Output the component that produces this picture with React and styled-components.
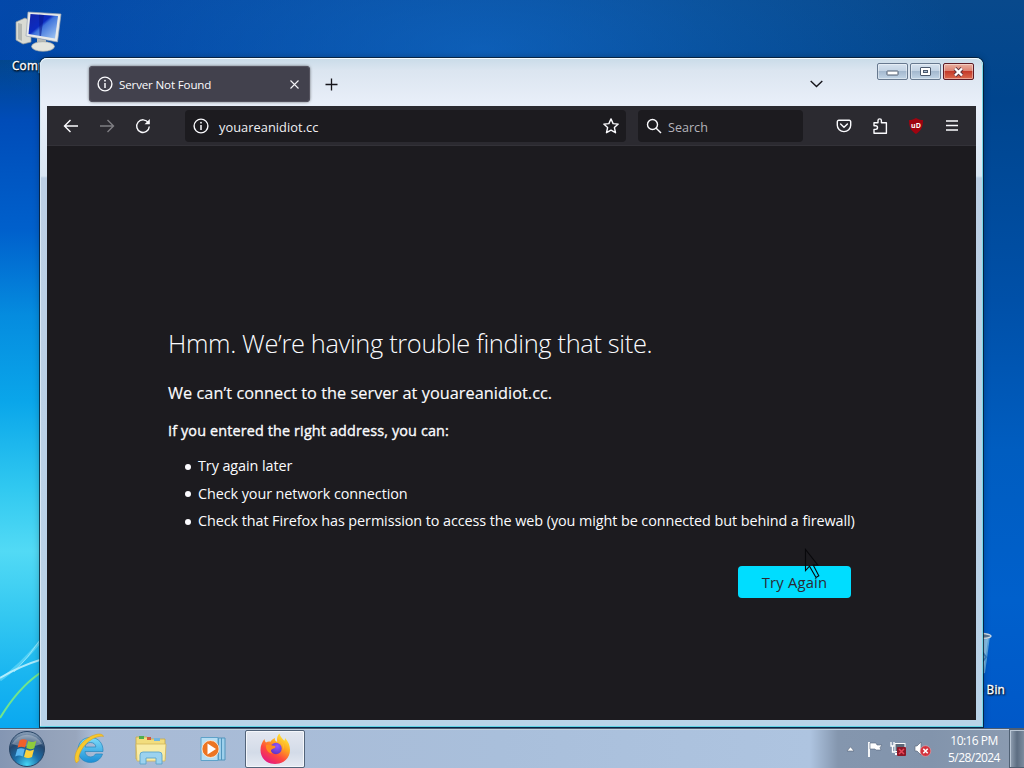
import React from 'react'
import styled, { createGlobalStyle } from 'styled-components'

const App = () => {
    return (
        <>
            <GlobalStyle />
            <Screen>
                <Desktop>
                    <Wallpaper />
                    <DesktopIcon $left={12} $top={8}>
                        <ComputerIcon />
                        <DesktopLabel>Computer</DesktopLabel>
                    </DesktopIcon>
                    <DesktopIcon $left={930} $top={628} $right>
                        <BinIcon />
                        <DesktopLabel>Recycle Bin</DesktopLabel>
                    </DesktopIcon>
                    <BrowserWindow />
                    <Cursor />
                </Desktop>
                <Taskbar />
            </Screen>
        </>
    )
}

const BrowserWindow = () => {
    return (
        <Frame>
            <TitleBar>
                <Tab>
                    <InfoIcon />
                    <TabTitle>Server Not Found</TabTitle>
                    <svg width="9" height="9" viewBox="0 0 9 9" stroke="#f3f3f6" strokeWidth="1.1">
                        <path d="M.5 .5l8 8M8.500 .5l-8 8" />
                    </svg>
                </Tab>
                <NewTab width="13" height="13" viewBox="0 0 13 13" stroke="#15141a" strokeWidth="1.3">
                    <path d="M6.500 .5v12M.5 6.500h12" />
                </NewTab>
                <TabList width="13" height="8" viewBox="0 0 13 8" fill="none" stroke="#15141a" strokeWidth="1.4">
                    <path d="M.7 1l5.800 5.500 5.800 -5.500" />
                </TabList>
                <WindowButtons>
                    <WindowButton>
                        <svg width="13" height="9" viewBox="0 0 13 9">
                            <rect x="1" y="4" width="11" height="4" rx=".5" fill="#fff" stroke="#4c5a6e" />
                        </svg>
                    </WindowButton>
                    <WindowButton>
                        <svg width="11" height="9" viewBox="0 0 11 9">
                            <rect x=".5" y=".5" width="10" height="8" rx=".5" fill="#fff" stroke="#4c5a6e" />
                            <rect x="3.500" y="3.500" width="4" height="2" fill="#a8bcd2" stroke="#4c5a6e" />
                        </svg>
                    </WindowButton>
                    <WindowButton $close>
                        <svg width="13" height="10" viewBox="0 0 13 10">
                            <path d="M3 1.500l7 7M10 1.500l-7 7" stroke="#5d3440" strokeWidth="4" />
                            <path d="M3 1.500l7 7M10 1.500l-7 7" stroke="#fff" strokeWidth="2.400" />
                        </svg>
                    </WindowButton>
                </WindowButtons>
            </TitleBar>
            <Toolbar>
                <NavGroup>
                    <NavIcon>
                        <path d="M15 8H1.500M7.500 2L1.500 8l6 6" />
                    </NavIcon>
                    <NavIcon $dim>
                        <path d="M1 8h13.500M8.500 2l6 6-6 6" />
                    </NavIcon>
                    <NavIcon>
                        <path d="M13.300 4.700A6.300 6.300 0 1 0 14.300 8.500" />
                        <path d="M14.800 1v5.200H9.600z" fill="#fbfbfe" stroke="none" />
                    </NavIcon>
                </NavGroup>
                <UrlBar>
                    <InfoIcon />
                    <UrlText>youareanidiot.cc</UrlText>
                    <NavIcon>
                        <path strokeLinejoin="round" d="M8 .9l2.100 4.700 5.100.5-3.800 3.500 1.100 5.100L8 12.100l-4.500 2.600 1.100-5.100L.8 6.100l5.100-.5z" />
                    </NavIcon>
                </UrlBar>
                <SearchBar>
                    <NavIcon>
                        <circle cx="6.500" cy="6.500" r="5" />
                        <path d="M10.200 10.200l4.800 4.800" />
                    </NavIcon>
                    <span>Search</span>
                </SearchBar>
                <Actions>
                    <NavIcon>
                        <path d="M2.800 2.200h10.400a1.500 1.500 0 0 1 1.500 1.500v3.600a6.700 6.300 0 0 1-13.400 0V3.700a1.500 1.500 0 0 1 1.500-1.500z" />
                        <path d="M4.600 6l3.400 3.300L11.400 6" strokeLinecap="round" />
                    </NavIcon>
                    <NavIcon>
                        <path strokeLinejoin="round" d="M2 15.200V11.400h1.700a1.800 1.800 0 0 0 0-3.600H2V4.700h4V2.600a1.700 1.700 0 0 1 3.400 0v2.100h5v10.500z" />
                    </NavIcon>
                    <Shield>
                        <svg width="16" height="16" viewBox="0 0 16 16">
                            <path d="M8 0c2 1.300 4.300 2 7 2.100C15 9 13.300 12.800 8 16 2.700 12.800 1 9 1 2.100 3.700 2 6 1.300 8 0z" fill="#a00310" />
                        </svg>
                        <ShieldText>uD</ShieldText>
                    </Shield>
                    <NavIcon>
                        <path d="M2 3h12M2 7.500h12M2 12h12" />
                    </NavIcon>
                </Actions>
            </Toolbar>
            <Page>
                <Heading>Hmm. We’re having trouble finding that site.</Heading>
                <Lead>We can’t connect to the server at youareanidiot.cc.</Lead>
                <Hint>If you entered the right address, you can:</Hint>
                <Tips>
                    <li>Try again later</li>
                    <li>Check your network connection</li>
                    <li>Check that Firefox has permission to access the web (you might be connected but behind a firewall)</li>
                </Tips>
                <RetryButton>Try Again</RetryButton>
            </Page>
        </Frame>
    )
}

const Taskbar = () => {
    return (
        <Bar>
            <StartOrb />
            <TaskButton><ExplorerE /></TaskButton>
            <TaskButton><FolderIcon /></TaskButton>
            <TaskButton><PlayerIcon /></TaskButton>
            <TaskButton $active><FirefoxIcon /></TaskButton>
            <Tray>
                <TrayIcon width="9" height="6" viewBox="0 0 9 6">
                    <path d="M4.500 .8L8 5H1z" fill="#fff" stroke="#59667a" strokeWidth=".6" />
                </TrayIcon>
                <TrayIcon width="16" height="16" viewBox="0 0 16 16">
                    <path d="M2 1v15" stroke="#fff" strokeWidth="1.800" />
                    <path d="M3 2h6l1 2h5l-2 2.500 1 2.500H9L8 8H3z" fill="#fff" stroke="#55647c" strokeWidth=".6" />
                </TrayIcon>
                <TrayIcon width="17" height="16" viewBox="0 0 17 16">
                    <path d="M1 1v4h3V1M2.500 5v6h3" fill="none" stroke="#fff" strokeWidth="1.300" />
                    <rect x="5" y="2.500" width="10" height="8" fill="#5c6878" stroke="#fff" />
                    <path d="M5 13h8" stroke="#fff" strokeWidth="2" />
                    <rect x="7" y="6" width="9" height="9" rx="1" fill="#8e1625" />
                    <path d="M9 8l5 5M14 8l-5 5" stroke="#e6485a" strokeWidth="1.500" />
                </TrayIcon>
                <TrayIcon width="18" height="16" viewBox="0 0 18 16">
                    <path d="M1 5h2l4-4v13l-4-4H1z" fill="#fff" stroke="#5e6a7c" strokeWidth=".7" />
                    <circle cx="11.500" cy="10" r="5.300" fill="#d3313c" stroke="#eda0a4" strokeWidth=".6" />
                    <path d="M9.300 7.800l4.400 4.400M13.700 7.800l-4.400 4.400" stroke="#fff" strokeWidth="1.600" />
                </TrayIcon>
                <Clock>
                    <span>10:16 PM</span>
                    <span>5/28/2024</span>
                </Clock>
                <ShowDesktop />
            </Tray>
        </Bar>
    )
}

const InfoIcon = () => (
    <NavIcon>
        <circle cx="8" cy="8" r="6.900" />
        <path d="M8 7v5" strokeWidth="1.500" />
        <circle cx="8" cy="4.700" r=".9" fill="#fbfbfe" stroke="none" />
    </NavIcon>
)

const ComputerIcon = () => (
    <svg width="50" height="48" viewBox="0 0 50 48">
        <defs>
            <linearGradient id="screen" x1="0" y1="0" x2="1" y2="1">
                <stop offset="0" stopColor="#1424a8" />
                <stop offset=".42" stopColor="#0b2bc0" />
                <stop offset=".5" stopColor="#3f74dc" />
                <stop offset="1" stopColor="#a9cdf4" />
            </linearGradient>
        </defs>
        <path d="M4 14l9-4 6 3v21l-8 2-7-4z" fill="#d9dbd4" stroke="#989c9a" strokeWidth=".7" />
        <path d="M6 15l4 1v17l-4-2z" fill="#b3b7b2" />
        <path d="M25 30l9 2v5h-9z" fill="#b8bcb9" />
        <ellipse cx="31" cy="38.500" rx="11.500" ry="4.800" fill="#e4e5de" stroke="#a3a8a5" strokeWidth=".7" />
        <path d="M16 4l33 2-3.500 28L14 28z" fill="#e8eaea" stroke="#9aa5b2" strokeWidth=".7" />
        <path d="M18.500 6L46 8l-3 22.500L16.500 26z" fill="url(#screen)" />
        <path d="M27 6.700l5 .4-3 21-1.500-.3z" fill="#0a1b90" opacity=".6" />
    </svg>
)

const BinIcon = () => (
    <svg width="44" height="48" viewBox="0 0 44 48">
        <path d="M2 8h38l-5 37q-14 5-28 0z" fill="#6ab0e0" opacity=".85" />
        <path d="M26 13l12-2-4 30-8 3z" fill="#a5d2ee" opacity=".6" />
        <path d="M30 21l6 8-6 8" stroke="#3a7fc0" fill="none" strokeWidth="2" />
        <ellipse cx="21" cy="8" rx="20" ry="3.200" fill="#5a7795" stroke="#cfdce6" strokeWidth="1.300" />
    </svg>
)

const StartOrb = () => (
    <Orb width="38" height="38" viewBox="0 0 38 38">
        <defs>
            <radialGradient id="orb" cx=".5" cy=".95" r=".9">
                <stop offset="0" stopColor="#45d6f5" />
                <stop offset=".4" stopColor="#1b6ea8" />
                <stop offset=".75" stopColor="#24466d" />
                <stop offset="1" stopColor="#8198b2" />
            </radialGradient>
        </defs>
        <circle cx="19" cy="19" r="17.500" fill="url(#orb)" stroke="#274465" strokeWidth="1" />
        <path d="M4 14a16 14 0 0 1 30 0q-15 5-30 0z" fill="#fff" opacity=".3" />
        <path d="M11.500 10.500q3.500-2.200 7.500-.3l-2 7.300q-4-1.700-7.500.2z" fill="#f0602b" />
        <path d="M20.300 11q4 2 8-.3l-2 7.500q-4 2-8-.2z" fill="#8fcb3c" />
        <path d="M9.200 19.200q3.500-2 7.500-.2l-2 7.400q-4-1.800-7.500.2z" fill="#58b5ef" />
        <path d="M18 19.600q4 2.200 8 0l-2 7.500q-4 2-8-.2z" fill="#fbd23c" />
    </Orb>
)

const ExplorerE = () => (
    <svg width="32" height="32" viewBox="0 0 32 32">
        <defs>
            <linearGradient id="ie" x1="0" y1="0" x2="0" y2="1">
                <stop offset="0" stopColor="#7edcfa" />
                <stop offset="1" stopColor="#1b8ed6" />
            </linearGradient>
        </defs>
        <path fillRule="evenodd" d="M17.500 4.500C9.500 4.500 5 10 5 17s5 12.500 12.500 12.500c5.700 0 10.300-3.200 12-8.500h-7c-1 1.900-2.800 2.900-5 2.900-3.300 0-5.300-2.200-5.500-5.400H30C30.500 10.500 25.500 4.500 17.500 4.500zM12 14c.4-2.800 2.500-4.500 5.500-4.500s5.100 1.700 5.400 4.500z" fill="url(#ie)" stroke="#2585bb" strokeWidth=".7" />
        <path d="M3.500 30C-2 24 7 5.500 23 1.500c4-1 7-.3 7.500 2C28 2.800 24.500 3.400 20 5.600 11 10.500 4.500 21.500 6 27.500z" fill="#f8c82c" stroke="#d49b18" strokeWidth=".5" />
    </svg>
)

const FolderIcon = () => (
    <svg width="34" height="32" viewBox="0 0 34 32">
        <path d="M2 4h11l2 2h16v20H2z" fill="#f2dd7d" stroke="#c5a849" strokeWidth=".8" />
        <path d="M5 3h5v3H5z" fill="#4fae50" />
        <path d="M13 4h4v3h-4z" fill="#d35a3e" />
        <path d="M20 5h6v3h-6z" fill="#72b6df" />
        <path d="M2 11h30l-1 17H3z" fill="#f9eca5" stroke="#d2b65a" strokeWidth=".8" />
        <path d="M6 31v-9q0-3 3-3h16q3 0 3 3v9h-6v-6H12v6z" fill="#9bd2ef" stroke="#5ba4cb" strokeWidth=".9" />
    </svg>
)

const PlayerIcon = () => (
    <svg width="32" height="32" viewBox="0 0 32 32">
        <path d="M11 5h17v22H11z" fill="#9ed0ec" stroke="#5195bd" />
        <path d="M24.500 5v22M21.500 5v22" stroke="#5195bd" />
        <path d="M4 4.500h17v23H4z" fill="#b7def3" stroke="#5fa2c9" />
        <circle cx="13.500" cy="16" r="8.500" fill="#ec7523" stroke="#fff0df" strokeWidth=".8" />
        <path d="M10.500 10.500l8.500 5.500-8.500 5.500z" fill="#fff" />
    </svg>
)

const FirefoxIcon = () => (
    <svg width="32" height="32" viewBox="0 0 32 32">
        <defs>
            <linearGradient id="fox" x1=".85" y1=".05" x2=".25" y2="1">
                <stop offset="0" stopColor="#fff13e" />
                <stop offset=".35" stopColor="#ffa51f" />
                <stop offset=".65" stopColor="#ff4a3d" />
                <stop offset="1" stopColor="#e31587" />
            </linearGradient>
            <radialGradient id="globe" cx=".6" cy=".3" r=".8">
                <stop offset="0" stopColor="#9059ff" />
                <stop offset="1" stopColor="#5b2fbd" />
            </radialGradient>
        </defs>
        <path d="M16 31C7.500 31 1.500 25 1.500 17c0-4.500 1.700-8 4-11 .2 1.500.6 2.500 1.500 3.500C8.500 8.600 10 8.400 11.500 8.800 12.500 7 14 5.800 16 5c-.5 2 .5 3 2.200 4C17.500 5 18.500 2.500 20.500.500c.6 3.500 3 5 4.800 7.200.7-.8.700-1.500.700-2.700 3.300 3.300 5 7.500 5 12 0 8-6.500 14-15 14z" fill="url(#fox)" />
        <circle cx="17" cy="15.500" r="5.700" fill="url(#globe)" />
        <path d="M7 12c3-1.200 5 .8 8 .8 1.400 0 1.900.7 1.200 1.700-1 1.300-2.500 1-3.700 2-1 1-.5 3 1.200 4-4 0-7-3-6.700-8.500z" fill="#ff8b20" />
        <path d="M18 8c4.500 1 7 4.200 6.500 9 2-4-.5-9.500-6.500-9z" fill="#ffbd32" />
    </svg>
)

const Cursor = () => (
    <Pointer width="18" height="32" viewBox="0 0 18 32">
        <path d="M1.500 1.500v21l4-4.300 6.500 11.300 2.800-1.700-5.600-10.800h4.500z" fill="none" stroke="#08080b" strokeWidth="1.100" />
    </Pointer>
)

// light trails in the lower left of the wallpaper
const Wallpaper = () => (
    <Trails width="40" height="140" viewBox="0 0 40 140" fill="none">
        <path d="M0 70Q20 56 40 32" stroke="#8ceafd" strokeWidth="3" opacity=".45" />
        <path d="M0 68Q20 56 40 50" stroke="#c3f2fe" strokeWidth="2" opacity=".85" />
        <path d="M14 62Q28 48 40 30" stroke="#b5f2fe" strokeWidth="1" opacity=".6" />
        <path d="M0 108Q18 78 40 63" stroke="#71e58c" strokeWidth="2" />
    </Trails>
)

const GlobalStyle = createGlobalStyle`
*{
    box-sizing:border-box;
}
body{
    margin:0;
    overflow:hidden;
    font-family:"Open Sans","Noto Sans",sans-serif;
}
svg{
    display:block;
    flex-shrink:0;
}
`

const Screen = styled.div`
width:1024px;
height:768px;
display:grid;
grid-template-rows:728px 40px;
overflow:hidden;
`

const Desktop = styled.div`
position:relative;
overflow:hidden;
background:
    linear-gradient(180deg, rgba(0,70,180,0) 60px, #004cb8 120px, #0060cc 230px, #058cdf 316px, #0aa6ea 402px, #30c8f0 487px, #52daf5 551px, #34c8f1 615px, #18b4f0 679px, #0aa8f0 728px) 0 0 / 45px 728px no-repeat,
    radial-gradient(ellipse 480px 180px at 480px 50px, rgba(20,110,205,.6), rgba(10,90,190,0)),
    linear-gradient(90deg, rgba(0,72,190,.6), rgba(0,72,190,0) 700px) 0 0 / 1024px 60px no-repeat,
    linear-gradient(180deg, #08498c 0, #00458e 100px, #0050a8 300px, #005dc0 450px, #0060cc 600px, #0058c8 728px);
`

const Trails = styled.svg`
position:absolute;
left:0;
top:610px;
`

const DesktopIcon = styled.div`
position:absolute;
left:${props => props.$left}px;
top:${props => props.$top}px;
width:${props => props.$right ? 75 : 60}px;
display:flex;
flex-direction:column;
align-items:${props => props.$right ? 'flex-end' : 'flex-start'};
gap:${props => props.$right ? 4 : 0}px;

svg{
    margin-right:${props => props.$right ? 11 : 0}px;
}
`

const DesktopLabel = styled.span`
color:#fff;
font-size:11.7px;
line-height:18px;
letter-spacing:.25px;
-webkit-text-stroke:.35px #fff;
white-space:nowrap;
text-shadow:0 1px 2px #000, 1px 1px 2px #000;
`

const Frame = styled.div`
position:absolute;
left:40px;
top:58px;
width:943px;
height:669px;
padding:0 7px 7px;
display:flex;
flex-direction:column;
border-radius:7px 7px 0 0;
background:linear-gradient(180deg, #c9dbe8 0, #dbe5f0 12px, #e9eff9 46px, #d9e6f3 118px, #bccfe4 120px, #b9d3e8 100%);
box-shadow:inset 0 1px 0 #f4fbff, inset 0 -1px 0 #5fd2e4, inset -1px 0 0 #76d8e8, inset 1px 0 0 #d8e8f4, 0 0 0 1px rgba(8,24,40,.75), 0 0 7px rgba(0,0,0,.3);
`

const TitleBar = styled.div`
height:48px;
flex-shrink:0;
display:flex;
align-items:flex-start;
`

const Tab = styled.div`
width:221px;
height:36px;
margin:8px 0 0 42px;
padding:0 11px 0 8px;
display:flex;
align-items:center;
gap:6px;
border-radius:4px;
background:#42414d;
box-shadow:0 0 3px rgba(0,0,0,.55), inset 0 0 0 1px #55535f;
`

const TabTitle = styled.span`
flex:1;
color:#fbfbfe;
font-size:11.6px;
letter-spacing:-.16px;
white-space:nowrap;
`

const NewTab = styled.svg`
margin:20px 0 0 15px;
`

const TabList = styled.svg`
margin:22px 0 0 auto;
`

const WindowButtons = styled.div`
display:flex;
gap:2px;
margin:5px 2px 0 54px;
`

const WindowButton = styled.div`
width:31px;
height:17px;
display:flex;
align-items:center;
justify-content:center;
border:1px solid ${props => props.$close ? '#5d1a24' : '#67798f'};
border-radius:2px;
background:${props => props.$close
        ? 'linear-gradient(180deg, #eab0a0 0, #dc8272 45%, #c43a2a 50%, #dd6a4e 100%)'
        : 'linear-gradient(180deg, #d5e2ef 0, #c3d3e4 45%, #a4b9cf 50%, #c1d4e6 100%)'};
box-shadow:inset 0 0 0 1px rgba(255,255,255,.4);
`

const Toolbar = styled.div`
height:40px;
flex-shrink:0;
display:flex;
align-items:center;
background:#2b2a30;
border-bottom:1px solid #333238;
`

const NavIcon = styled.svg.attrs({ width: 16, height: 16, viewBox: '0 0 16 16' })`
fill:none;
stroke:#fbfbfe;
stroke-width:1.4;
opacity:${props => props.$dim ? .4 : 1};
`

const NavGroup = styled.div`
display:flex;
gap:20px;
width:138px;
padding:1px 0 0 16px;
`

const UrlBar = styled.div`
width:441px;
height:32px;
padding:0 7px 0 8px;
display:flex;
align-items:center;
gap:10px;
border-radius:4px;
background:#1c1b1f;
`

const UrlText = styled.span`
flex:1;
color:#f0f0f3;
font-size:12.8px;
letter-spacing:.05px;
line-height:18px;
padding-top:2px;
`

const SearchBar = styled.div`
width:165px;
height:32px;
margin-left:12px;
padding:0 8px;
display:flex;
align-items:center;
gap:6px;
border-radius:4px;
background:#1c1b1f;
color:#b4b3ba;
font-size:12.6px;

span{
    line-height:18px;
    padding-top:4px;
}
`

const Actions = styled.div`
flex:1;
display:flex;
justify-content:flex-end;
gap:20px;
padding:1px 16px 0 0;
`

const Shield = styled.div`
position:relative;
width:16px;
height:16px;
`

const ShieldText = styled.span`
position:absolute;
inset:0;
color:#fff;
font-size:7px;
font-weight:700;
line-height:15px;
text-align:center;
`

const Page = styled.div`
flex:1;
display:flex;
flex-direction:column;
padding:179px 125px 0 121px;
background:#1c1b1f;
color:#fbfbfe;
white-space:nowrap;
`

const Heading = styled.h1`
margin:0;
font-size:25.4px;
font-weight:300;
line-height:36px;
letter-spacing:-.33px;
`

const Lead = styled.p`
margin:20px 0 0;
font-size:16.3px;
line-height:24px;
letter-spacing:.04px;
-webkit-text-stroke:.15px #fbfbfe;
`

const Hint = styled.p`
margin:14px 0 0;
font-size:14.4px;
line-height:24px;
letter-spacing:.14px;
-webkit-text-stroke:.35px #fbfbfe;
`

const Tips = styled.ul`
margin:9px 0 0;
padding:0 0 0 17px;
list-style:none;
font-size:14.4px;
line-height:27.5px;
letter-spacing:-.08px;

li{
    display:flex;
    align-items:center;
}

li::before{
    content:"";
    flex-shrink:0;
    width:6px;
    height:6px;
    margin:2px 7px 0 0;
    border-radius:50%;
    background:#fbfbfe;
}
`

const RetryButton = styled.button`
align-self:flex-end;
width:113px;
height:32px;
margin-top:31px;
padding:1px 0 0;
border:0;
border-radius:4px;
background:#00ddff;
color:#2b2a33;
font-family:inherit;
font-size:14.8px;
letter-spacing:.2px;
`

const Pointer = styled.svg`
position:absolute;
left:804px;
top:548px;
`

const Bar = styled.div`
display:flex;
align-items:center;
background:linear-gradient(90deg, #8496b3 0, #93a2ba 50px, #98a6bd 76px, #a8bad5 92px, #a9bfdb 500px, #aec4e0 810px, #8496ae 838px, #8294ac 930px, #8c9cb1 1024px);
box-shadow:inset 0 1px 0 #4e5d70, inset 0 2px 0 #c4d2e3;
`

const Orb = styled.svg`
margin:2px 13px 0 8px;
`

const TaskButton = styled.div`
width:60px;
height:38px;
margin:1px 2px 0 0;
display:flex;
align-items:center;
justify-content:center;
border:1px solid ${props => props.$active ? '#53647a' : 'transparent'};
border-radius:2px;
background:${props => props.$active ? 'linear-gradient(180deg, #e3e7f0, #d3dbe8 60%, #e6eaf2)' : 'none'};
box-shadow:${props => props.$active ? 'inset 0 0 0 1px #f5f7fb' : 'none'};
`

const Tray = styled.div`
flex:1;
display:flex;
align-items:center;
justify-content:flex-end;
height:100%;
padding-top:1px;
`

const TrayIcon = styled.svg`
margin:1px 7px 0 0;

&:first-child{
    margin-right:12px;
}
`

const Clock = styled.div`
width:60px;
margin:1px 5px 0;
display:flex;
flex-direction:column;
align-items:center;
color:#fff;
font-size:12px;
line-height:17px;
letter-spacing:-.55px;
white-space:nowrap;
`

const ShowDesktop = styled.div`
width:15px;
height:39px;
border:1px solid #4f6073;
border-right:0;
background:linear-gradient(90deg, #93a2b4, #5d6e82 50%, #7c8b9e);
box-shadow:inset 1px 1px 0 #b9c6d4;
`

export default App
